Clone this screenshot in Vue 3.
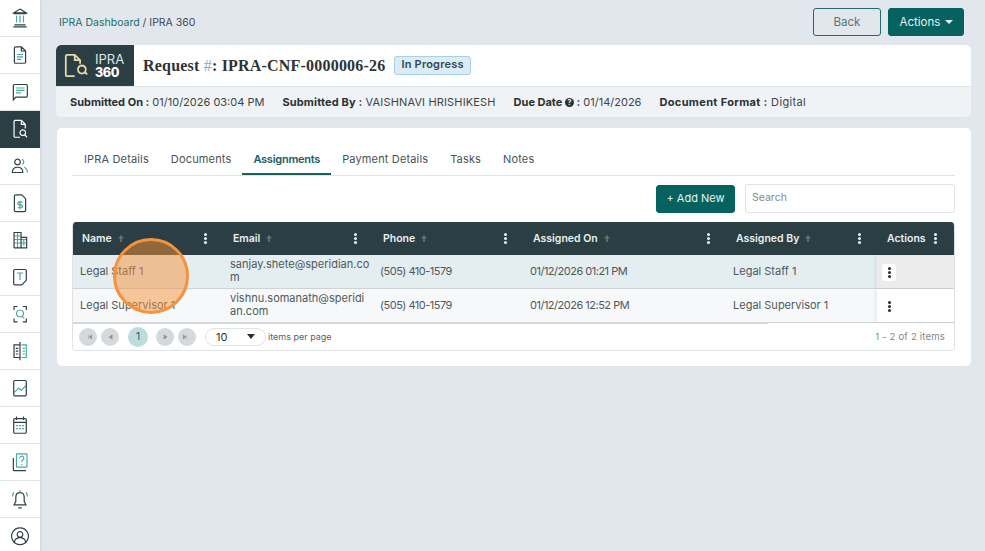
<script setup>
const navIcons = [
  { d: ['M11 9.500h18M20 3l9 5.500h-18zM12 25.500h16M10.500 28.500h19'], t: ['M15 12v10M20 12v10M25 12v10'] },
  { d: ['M14 4h8l6 6v16a1.500 1.500 0 0 1-1.500 1.500h-13a1.500 1.500 0 0 1-1.500-1.500v-20.500a1.500 1.500 0 0 1 1.500-1.500zM22 4v6h6'], t: ['M15.500 15h9M15.500 18.500h9M15.500 22h6'] },
  { d: ['M12 5h17a1.500 1.500 0 0 1 1.500 1.500v15a1.500 1.500 0 0 1-1.500 1.500h-15l-3.500 4v-20.500a1.500 1.500 0 0 1 1.500-1.500z'], t: ['M14.500 10h12M14.500 13.500h12M14.500 17h7'] },
  { d: ['M20 27.500h-7a1.500 1.500 0 0 1-1.500-1.500v-21a1.500 1.500 0 0 1 1.500-1.500h9l5.500 5.500v6M22 3.500v5.500h5.500M24 17a4 4 0 1 0 .01 0M27 24l3 3.500'], t: [] },
  { d: ['M16.500 6a4 4 0 1 0 .01 0M9 25c0-5 3.500-7.500 7.500-7.500s7.500 2.500 7.500 7.500z'], t: ['M23 6c2.500 1 3.500 5 .5 7.500M26 17.500c2.500 1 4.500 4 4.500 7.500'] },
  { d: ['M13.500 4h9l5.500 5.500v17a1.500 1.500 0 0 1-1.500 1.500h-13a1.500 1.500 0 0 1-1.500-1.500v-21a1.500 1.500 0 0 1 1.500-1.500z'], t: ['M23.500 14.500h-4.500a2 2 0 0 0 0 4h2.500a2 2 0 0 1 0 4h-5M20 12.500v12'] },
  { d: ['M11.500 27v-22h10v22M21.500 12h8v15h-18'], t: ['M11.500 10h10M11.500 15h18M11.500 20h18M16.500 5v22M25.500 15v9'] },
  { d: ['M12.500 5h15a1.500 1.500 0 0 1 1.500 1.500v14l-6.500 6.500h-10a1.500 1.500 0 0 1-1.500-1.500v-19a1.500 1.500 0 0 1 1.500-1.500z'], t: ['M15.500 10h9M20 10v10'] },
  { d: ['M11.500 10v-5h5M24 5h5v5M29 22v5h-5M16.500 27h-5v-5'], t: ['M20 10a5 5 0 1 0 .01 0M23.500 19.500l2.500 2.500'] },
  { d: ['M20 3v26M20 7h-8.500v18h8.500M14 12h3.500M14 16h3.500M14 20h3.500'], t: ['M22 7h7v18h-7M24 12h3M24 16h3M24 20h3'] },
  { d: ['M12.500 5h15a1.500 1.500 0 0 1 1.500 1.500v19a1.500 1.500 0 0 1-1.500 1.500h-15a1.500 1.500 0 0 1-1.500-1.500v-19a1.500 1.500 0 0 1 1.500-1.500z'], t: ['M12 22l6-6 4 3 7-7'] },
  { d: ['M12.500 6.500h15a1.500 1.500 0 0 1 1.500 1.500v18a1.500 1.500 0 0 1-1.500 1.500h-15a1.500 1.500 0 0 1-1.500-1.500v-18a1.500 1.500 0 0 1 1.500-1.500zM11 12h18M15 3.500v5M25 3.500v5'], t: ['M14 16.500h3M18.500 16.500h3M23 16.500h3M14 21h3M18.500 21h3M23 21h3'] },
  { d: ['M10.500 10v17a1 1 0 0 0 1 1h17'], t: ['M16 4h13a1 1 0 0 1 1 1v17a1 1 0 0 1-1 1h-13a1 1 0 0 1-1-1v-17a1 1 0 0 1 1-1zM19.500 10.500a3 3 0 1 1 4.500 2.500c-1.500 1-1.500 1.500-1.500 3M22.500 18.500v1.500'] },
  { d: ['M20 6.500c-4.500 0-6 3-6 7v6l-2.500 4.500h17l-2.500-4.500v-6c0-4-1.500-7-6-7zM17.500 28.500h5'], t: ['M11 6l-2 6M29 6l2 6M20 3v2.500'] },
  { d: ['M20 4a12 12 0 1 0 .01 0M20 9.500a4 4 0 1 0 .01 0M12 24c1-4 4-6 8-6s7 2 8 6'], t: [] },
]
const tabs = ['IPRA Details', 'Documents', 'Assignments', 'Payment Details', 'Tasks', 'Notes']
const columns = ['Name', 'Email', 'Phone', 'Assigned On', 'Assigned By']
const rows = [
  { name: 'Legal Staff 1', email: 'sanjay.shete@speridian.co\nm', phone: '(505) 410-1579', on: '01/12/2026 01:21 PM', by: 'Legal Staff 1' },
  { name: 'Legal Supervisor 1', email: 'vishnu.somanath@speridi\nan.com', phone: '(505) 410-1579', on: '01/12/2026 12:52 PM', by: 'Legal Supervisor 1' },
]
const pagerLeft = ['M9 4v8M15 4l-5 4 5 4z', 'M12 4l-6 4 6 4z']
const pagerRight = ['M6 4l6 4-6 4z', 'M7 4v8M1 4l5 4-5 4z']
</script>

<template>
  <div class="page">
    <nav class="sidebar">
      <div v-for="(icon, i) in navIcons" :key="i" class="nav-item" :class="{ active: i === 3 }">
        <svg width="28" height="22.400" viewBox="0 0 40 32" fill="none">
          <path v-for="d in icon.t" :key="d" :d="d" class="ink-teal" />
          <path v-for="d in icon.d" :key="d" :d="d" class="ink-dark" />
        </svg>
      </div>
    </nav>

    <main class="main">
      <div class="topbar">
        <div class="crumbs"><span class="crumb-link">IPRA Dashboard</span> / IPRA 360</div>
        <div class="top-actions">
          <button class="btn btn-outline">Back</button>
          <button class="btn btn-solid">Actions <i class="caret"></i></button>
        </div>
      </div>

      <section class="summary">
        <div class="summary-head">
          <div class="brand">
            <svg width="25" height="27" viewBox="0 0 28 30" fill="none" stroke="#e8d9a8" stroke-width="2">
              <path d="M12 27H3.500a1.500 1.500 0 0 1-1.500-1.500V4.500A1.500 1.500 0 0 1 3.500 3H12l6 6v4M12 3v6h6" />
              <path d="M20 15a4.500 4.500 0 1 0 .01 0M23 22l3 3" />
            </svg>
            <div class="brand-text"><span>IPRA</span><b>360</b></div>
          </div>
          <h1 class="title">Request <span class="hash">#</span>: IPRA-CNF-0000006-26</h1>
          <span class="status">In Progress</span>
        </div>
        <div class="meta">
          <span><b>Submitted On :</b> 01/10/2026 03:04 PM</span>
          <span class="roomy"><b>Submitted By :</b> VAISHNAVI HRISHIKESH</span>
          <span><b>Due Date <i class="help">?</i> :</b> 01/14/2026</span>
          <span class="wide"><b>Document Format :</b> Digital</span>
        </div>
      </section>

      <section class="content">
        <div class="tabs">
          <span v-for="t in tabs" :key="t" class="tab" :class="{ current: t === 'Assignments' }">{{ t }}</span>
        </div>
        <div class="toolbar">
          <button class="btn btn-solid btn-add">+ Add New</button>
          <input class="search" placeholder="Search" />
        </div>

        <div class="grid">
          <div class="row head">
            <div v-for="c in columns" :key="c" class="th">
              <span>{{ c }}</span>
              <svg class="sort" width="6" height="7" viewBox="0 0 7 8"><path d="M3.500 0L7 4H4.500v4h-2V4H0z" /></svg>
              <i class="kebab light"></i>
            </div>
            <div class="th th-actions"><span>Actions</span><i class="kebab light"></i></div>
          </div>
          <div v-for="(r, i) in rows" :key="r.name" class="row body" :class="i === 0 ? 'tinted' : 'plain'">
            <div class="td">{{ r.name }}</div>
            <div class="td td-mail">{{ r.email }}</div>
            <div class="td td-num">{{ r.phone }}</div>
            <div class="td td-num">{{ r.on }}</div>
            <div class="td">{{ r.by }}</div>
            <div class="td td-actions"><span class="kebab-btn"><i class="kebab"></i></span></div>
          </div>
          <div class="pager">
            <div class="pager-nav">
              <span v-for="d in pagerLeft" :key="d" class="page-btn"><svg width="16" height="16" viewBox="0 0 16 16"><path :d="d" /></svg></span>
              <span class="page-num">1</span>
              <span v-for="d in pagerRight" :key="d" class="page-btn"><svg width="16" height="16" viewBox="0 0 16 16"><path :d="d" /></svg></span>
              <span class="page-size">10<i class="size-caret"></i></span>
              <span class="per-page">items per page</span>
            </div>
            <span class="count">1 - 2 of 2 items</span>
          </div>
          <div class="scroll-thumb"></div>
        </div>
      </section>
    </main>

    <div class="click-marker"></div>
  </div>
</template>

<style>
html, body { margin: 0; background: #e2e7ed; }
</style>

<style scoped>
.page {
  display: flex;
  width: 985px;
  height: 551px;
  overflow: hidden;
  position: relative;
  background: #e2e7ed;
  font-family: Inter, "Open Sans", sans-serif;
  font-size: 11px;
  color: #3c4448;
}
.sidebar {
  width: 40px;
  flex: none;
  background: #fff;
  box-shadow: 1px 0 3px rgba(60, 70, 80, .12);
}
.nav-item {
  height: 36px;
  border-bottom: 1px solid #dfe3e6;
  display: flex;
  align-items: center;
  justify-content: center;
}
.ink-dark { stroke: #2d4146; stroke-width: 1.700; }
.ink-teal { stroke: #4ba79f; stroke-width: 1.700; }
.nav-item.active { background: #2b3e43; border-bottom-color: #2b3e43; }
.nav-item.active .ink-dark { stroke: #fff; }

.main { flex: 1; min-width: 0; padding: 8px 14px 0 16px; }
.topbar { display: flex; justify-content: space-between; align-items: center; height: 28px; padding-right: 7px; padding-left: 3px; }
.crumbs { font-size: 10.500px; color: #3f4a4e; }
.crumb-link { color: #1f6d6c; }
.top-actions { display: flex; gap: 7px; }
.btn {
  font: inherit;
  border-radius: 3px;
  height: 28px;
  font-size: 11.500px;
  padding: 0;
  cursor: pointer;
}
.btn-outline { width: 68px; background: transparent; border: 1px solid #1f6a6b; color: #4f7a7b; }
.btn-solid { width: 76px; background: #05625f; border: 1px solid #05625f; color: #e8f2f1; }
.caret {
  display: inline-block;
  border: 4px solid transparent;
  border-top-color: currentColor;
  border-bottom: 0;
  vertical-align: 2px;
  margin-left: 1px;
}

.summary { margin-top: 9px; height: 72px; border-radius: 5px; background: #f0f3f5; overflow: hidden; }
.summary-head { height: 41px; background: #fff; border-bottom: 1px solid #dee3e6; display: flex; align-items: center; }
.brand {
  width: 78px;
  height: 41px;
  background: #2b3e43;
  border-radius: 5px 0 0 0;
  display: flex;
  align-items: center;
  gap: 6px;
  padding-left: 8px;
  box-sizing: border-box;
  color: #fff;
}
.brand-text { display: flex; flex-direction: column; font-size: 13px; line-height: 13px; }
.brand-text span { color: #dfe6e6; }
.brand-text b { font-size: 12.500px; font-weight: 800; letter-spacing: -.4px; }
.title {
  margin: 0 0 0 9px;
  font-family: "Liberation Serif", serif;
  font-size: 16px;
  font-weight: 700;
  color: #2d3336;
  letter-spacing: .2px;
}
.hash { color: #9aa3a6; font-weight: 400; }
.status {
  margin-left: 9px;
  height: 19px;
  padding: 0 6px;
  line-height: 15px;
  box-sizing: border-box;
  background: #dcecf7;
  border: 1px solid #a9cfe4;
  border-radius: 3px;
  font-size: 11px;
  font-weight: 600;
  color: #2f4a55;
  letter-spacing: .2px;
}
.meta { display: flex; gap: 18px; align-items: center; height: 30px; padding-left: 14px; font-size: 11px; color: #3c4448; }
.meta .roomy { letter-spacing: .15px; }
.meta .wide { letter-spacing: .35px; }
.meta b { font-weight: 700; color: #2a3034; }
.help {
  display: inline-block;
  width: 9px;
  height: 9px;
  border-radius: 50%;
  background: #2a3034;
  color: #fff;
  font-size: 7px;
  line-height: 9px;
  text-align: center;
  font-style: normal;
  vertical-align: 1px;
}

.content {
  margin: 11px 0 0 1px;
  height: 238px;
  box-sizing: border-box;
  background: #fff;
  border-radius: 5px;
  padding: 16px 16px 0 15px;
}
.tabs { display: flex; border-bottom: 1px solid #dfe3e6; height: 31px; padding-left: 1px; }
.tab {
  height: 31px;
  box-sizing: border-box;
  padding: 8px 11px 0;
  font-size: 11px;
  color: #4a5256;
  letter-spacing: .15px;
  white-space: nowrap;
}
.tab.current { color: #17605f; font-weight: 600; letter-spacing: -.25px; border-bottom: 2px solid #17605f; }
.toolbar { display: flex; justify-content: flex-end; gap: 10px; margin-top: 8px; height: 29px; align-items: center; }
.btn-add { width: 79px; font-size: 11px; padding-bottom: 2px; }
.search {
  width: 210px;
  height: 29px;
  box-sizing: border-box;
  border: 1px solid #dfe3e6;
  border-radius: 3px;
  padding: 0 6px 2px;
  font: inherit;
  font-size: 10.500px;
  outline: none;
}
.search::placeholder { color: #858c90; }

.grid {
  position: relative;
  margin-top: 9px;
  width: 883px;
  height: 129px;
  box-sizing: border-box;
  border: 1px solid #dfe3e6;
  border-top: 0;
  border-radius: 4px;
  overflow: hidden;
}
.row { display: grid; grid-template-columns: 150px 150px 150px 203px 151px 1fr; }
.head { height: 33px; background: #2b3e43; color: #eaf0f0; font-weight: 600; font-size: 10.500px; }
.th { display: flex; align-items: center; gap: 6px; padding: 0 0 0 10px; position: relative; }
.th:first-child { padding-left: 9px; }
.sort { fill: #62757a; }
.kebab {
  display: block;
  width: 3px;
  height: 3px;
  border-radius: 50%;
  background: #262c2f;
  box-shadow: 0 4px 0 #262c2f, 0 -4px 0 #262c2f;
}
.kebab.light { background: #e9eeee; box-shadow: 0 4px 0 #e9eeee, 0 -4px 0 #e9eeee; }
.th .kebab { position: absolute; right: 16px; top: 15px; }
.th-actions .kebab { right: 17px; }
.body { height: 33px; border-bottom: 1px solid #cdd2d5; box-sizing: content-box; font-size: 11px; color: #50585c; }
.tinted { background: #e4edf0; }
.plain { background: #f6f8f9; }
.td { display: flex; align-items: center; padding: 0 0 2px 7px; }
.td-mail { white-space: pre-line; line-height: 13px; }
.td-num { letter-spacing: -.5px; }
.td-actions { background: #fff; padding: 2px 0 0 5px; box-shadow: -2px 0 3px rgba(40, 50, 60, .06); }
.tinted .td-actions { background: #ececec; }
.kebab-btn { width: 14px; height: 17px; display: flex; align-items: center; justify-content: center; border-radius: 3px; }
.tinted .kebab-btn { background: #fff; }
.pager {
  display: flex;
  justify-content: space-between;
  align-items: center;
  height: 27px;
  padding: 0 9px 0 6px;
  background: #fff;
}
.pager-nav { display: flex; align-items: center; }
.page-btn {
  width: 18px;
  height: 18px;
  border-radius: 50%;
  background: #d6d9dc;
  display: flex;
  align-items: center;
  justify-content: center;
  margin-right: 4px;
}
.page-btn svg { fill: #8b9296; stroke: #8b9296; stroke-width: .8; transform: scale(.55); }
.page-num {
  width: 20px;
  height: 20px;
  border-radius: 50%;
  background: #bcdcdf;
  color: #1f6d6c;
  font-size: 11px;
  text-align: center;
  line-height: 18px;
  margin: 0 8px 0 5px;
}
.page-size {
  margin-left: 5px;
  width: 61px;
  height: 18px;
  box-sizing: border-box;
  border: 1px solid #dfe3e6;
  border-radius: 9px;
  display: flex;
  align-items: center;
  justify-content: space-between;
  padding: 0 10px;
  color: #2a3034;
}
.size-caret { border: 4px solid transparent; border-top: 5px solid #2a3034; border-bottom: 0; }
.per-page { margin-left: 2px; font-size: 9px; color: #5a6266; }
.count { font-size: 9.500px; color: #83898d; letter-spacing: .2px; }
.scroll-thumb { position: absolute; left: 0; top: 100px; width: 695px; height: 2px; background: #d5d8da; }

.click-marker {
  position: absolute;
  left: 113px;
  top: 238px;
  width: 76px;
  height: 76px;
  box-sizing: border-box;
  border: 3px solid #f6923a;
  border-radius: 50%;
  background: rgba(246, 146, 58, .5);
}
</style>
